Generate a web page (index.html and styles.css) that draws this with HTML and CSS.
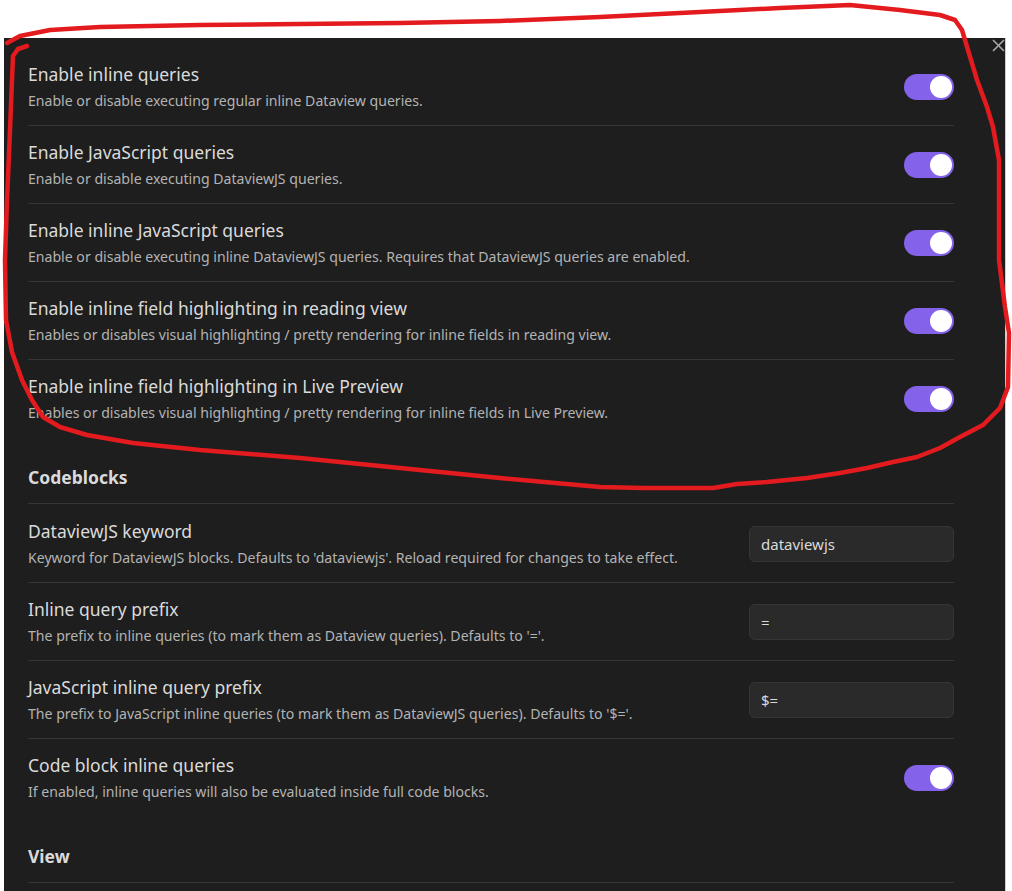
FILE: index.html
```html
<!DOCTYPE html>
<html lang="en">
<head>
<meta charset="utf-8">
<title>Dataview settings</title>
<link rel="stylesheet" href="styles.css">
</head>
<body>
<div class="top-gap"></div>
<div class="panel">
  <button class="close" aria-label="Close">
    <svg viewBox="0 0 13 13" width="13" height="13"><path d="M1 1 L12 12 M12 1 L1 12" stroke="#a8a8a8" stroke-width="1.6" fill="none"/></svg>
  </button>

  <div class="setting-item first">
    <div class="info">
      <div class="name">Enable inline queries</div>
      <div class="desc">Enable or disable executing regular inline Dataview queries.</div>
    </div>
    <div class="toggle on"><span class="knob"></span></div>
  </div>
  <div class="setting-item">
    <div class="info">
      <div class="name">Enable JavaScript queries</div>
      <div class="desc">Enable or disable executing DataviewJS queries.</div>
    </div>
    <div class="toggle on"><span class="knob"></span></div>
  </div>
  <div class="setting-item">
    <div class="info">
      <div class="name">Enable inline JavaScript queries</div>
      <div class="desc">Enable or disable executing inline DataviewJS queries. Requires that DataviewJS queries are enabled.</div>
    </div>
    <div class="toggle on"><span class="knob"></span></div>
  </div>
  <div class="setting-item">
    <div class="info">
      <div class="name">Enable inline field highlighting in reading view</div>
      <div class="desc">Enables or disables visual highlighting / pretty rendering for inline fields in reading view.</div>
    </div>
    <div class="toggle on"><span class="knob"></span></div>
  </div>
  <div class="setting-item">
    <div class="info">
      <div class="name">Enable inline field highlighting in Live Preview</div>
      <div class="desc">Enables or disables visual highlighting / pretty rendering for inline fields in Live Preview.</div>
    </div>
    <div class="toggle on"><span class="knob"></span></div>
  </div>

  <div class="heading">Codeblocks</div>

  <div class="setting-item first">
    <div class="info">
      <div class="name">DataviewJS keyword</div>
      <div class="desc">Keyword for DataviewJS blocks. Defaults to 'dataviewjs'. Reload required for changes to take effect.</div>
    </div>
    <input class="text-input" type="text" value="dataviewjs">
  </div>
  <div class="setting-item">
    <div class="info">
      <div class="name">Inline query prefix</div>
      <div class="desc">The prefix to inline queries (to mark them as Dataview queries). Defaults to '='.</div>
    </div>
    <input class="text-input" type="text" value="=">
  </div>
  <div class="setting-item">
    <div class="info">
      <div class="name">JavaScript inline query prefix</div>
      <div class="desc">The prefix to JavaScript inline queries (to mark them as DataviewJS queries). Defaults to '$='.</div>
    </div>
    <input class="text-input" type="text" value="$=">
  </div>
  <div class="setting-item">
    <div class="info">
      <div class="name">Code block inline queries</div>
      <div class="desc">If enabled, inline queries will also be evaluated inside full code blocks.</div>
    </div>
    <div class="toggle on"><span class="knob"></span></div>
  </div>

  <div class="heading">View</div>
</div>

<svg class="annotation" viewBox="0 0 1012 891" width="1012" height="891" aria-hidden="true">
  <polyline fill="none" stroke="#e31b1f" stroke-width="4.5" stroke-linecap="round" stroke-linejoin="round"
    points="27,46 18,49 13,56 12,80 10,130 7,200 5,260 6,320 12,352 22,380 32,400 43,417 60,427 87,435 133,443 200,450 300,458 400,468 500,478 600,487 643,488 713,488 737,484 767,482 807,478 840,473 867,468 893,462 917,457 940,448 960,437 983,425 1000,408 1008,387 1009,333 1005,307 999,260 999,160 993,127 987,107 977,80 968,50 962,30 955,20 940,15 900,10 850,5 780,8 700,12 600,17 500,21 400,23 300,24 200,25 100,27 50,30 20,36 7,43"/>
</svg>
</body>
</html>
```

FILE: styles.css
```css
* {
  box-sizing: border-box;
}

html, body {
  margin: 0;
  padding: 0;
  background: #ffffff;
  width: 1012px;
  height: 891px;
  overflow: hidden;
}

body {
  position: relative;
  font-family: "Noto Sans", "Open Sans", sans-serif;
}

.top-gap {
  height: 38px;
}

.panel {
  position: relative;
  margin-left: 4px;
  width: 1002px;
  height: 853px;
  background: #1e1e1e;
  border-right: 1px solid #cfcfcf;
  padding: 9px 51px 0 24px;
  overflow: hidden;
}

.close {
  position: absolute;
  top: 1px;
  right: 0;
  width: 13px;
  height: 13px;
  padding: 0;
  margin: 0;
  border: 0;
  background: transparent;
  display: flex;
}

.setting-item {
  display: flex;
  align-items: center;
  gap: 20px;
  height: 78px;
  border-top: 1px solid #363636;
}

.setting-item.first {
  border-top-color: transparent;
}

.info {
  flex: 1;
  min-width: 0;
  display: flex;
  flex-direction: column;
  gap: 5px;
}

.name {
  font-size: 17.5px;
  line-height: 24px;
  color: #dadada;
  white-space: nowrap;
}

.desc {
  font-size: 14.1px;
  line-height: 20px;
  color: #b3b3b3;
  white-space: nowrap;
}

.heading {
  font-size: 17.5px;
  font-weight: 700;
  line-height: 24px;
  color: #dadada;
  padding: 28px 0 14px;
  border-bottom: 1px solid #363636;
}

.toggle {
  position: relative;
  flex: none;
  width: 50px;
  height: 26px;
  border-radius: 13px;
  background: #3f3f3f;
}

.toggle.on {
  background: #8463ea;
}

.knob {
  position: absolute;
  top: 2px;
  right: 2px;
  width: 22px;
  height: 22px;
  border-radius: 50%;
  background: #ffffff;
}

.text-input {
  flex: none;
  width: 205px;
  height: 36px;
  background: #2a2a2a;
  border: 1px solid #363636;
  border-radius: 6px;
  padding: 0 11px;
  color: #dadada;
  font-family: "Noto Sans", "Open Sans", sans-serif;
  font-size: 15px;
  outline: none;
}

.annotation {
  position: absolute;
  left: 0;
  top: 0;
  pointer-events: none;
}
```
